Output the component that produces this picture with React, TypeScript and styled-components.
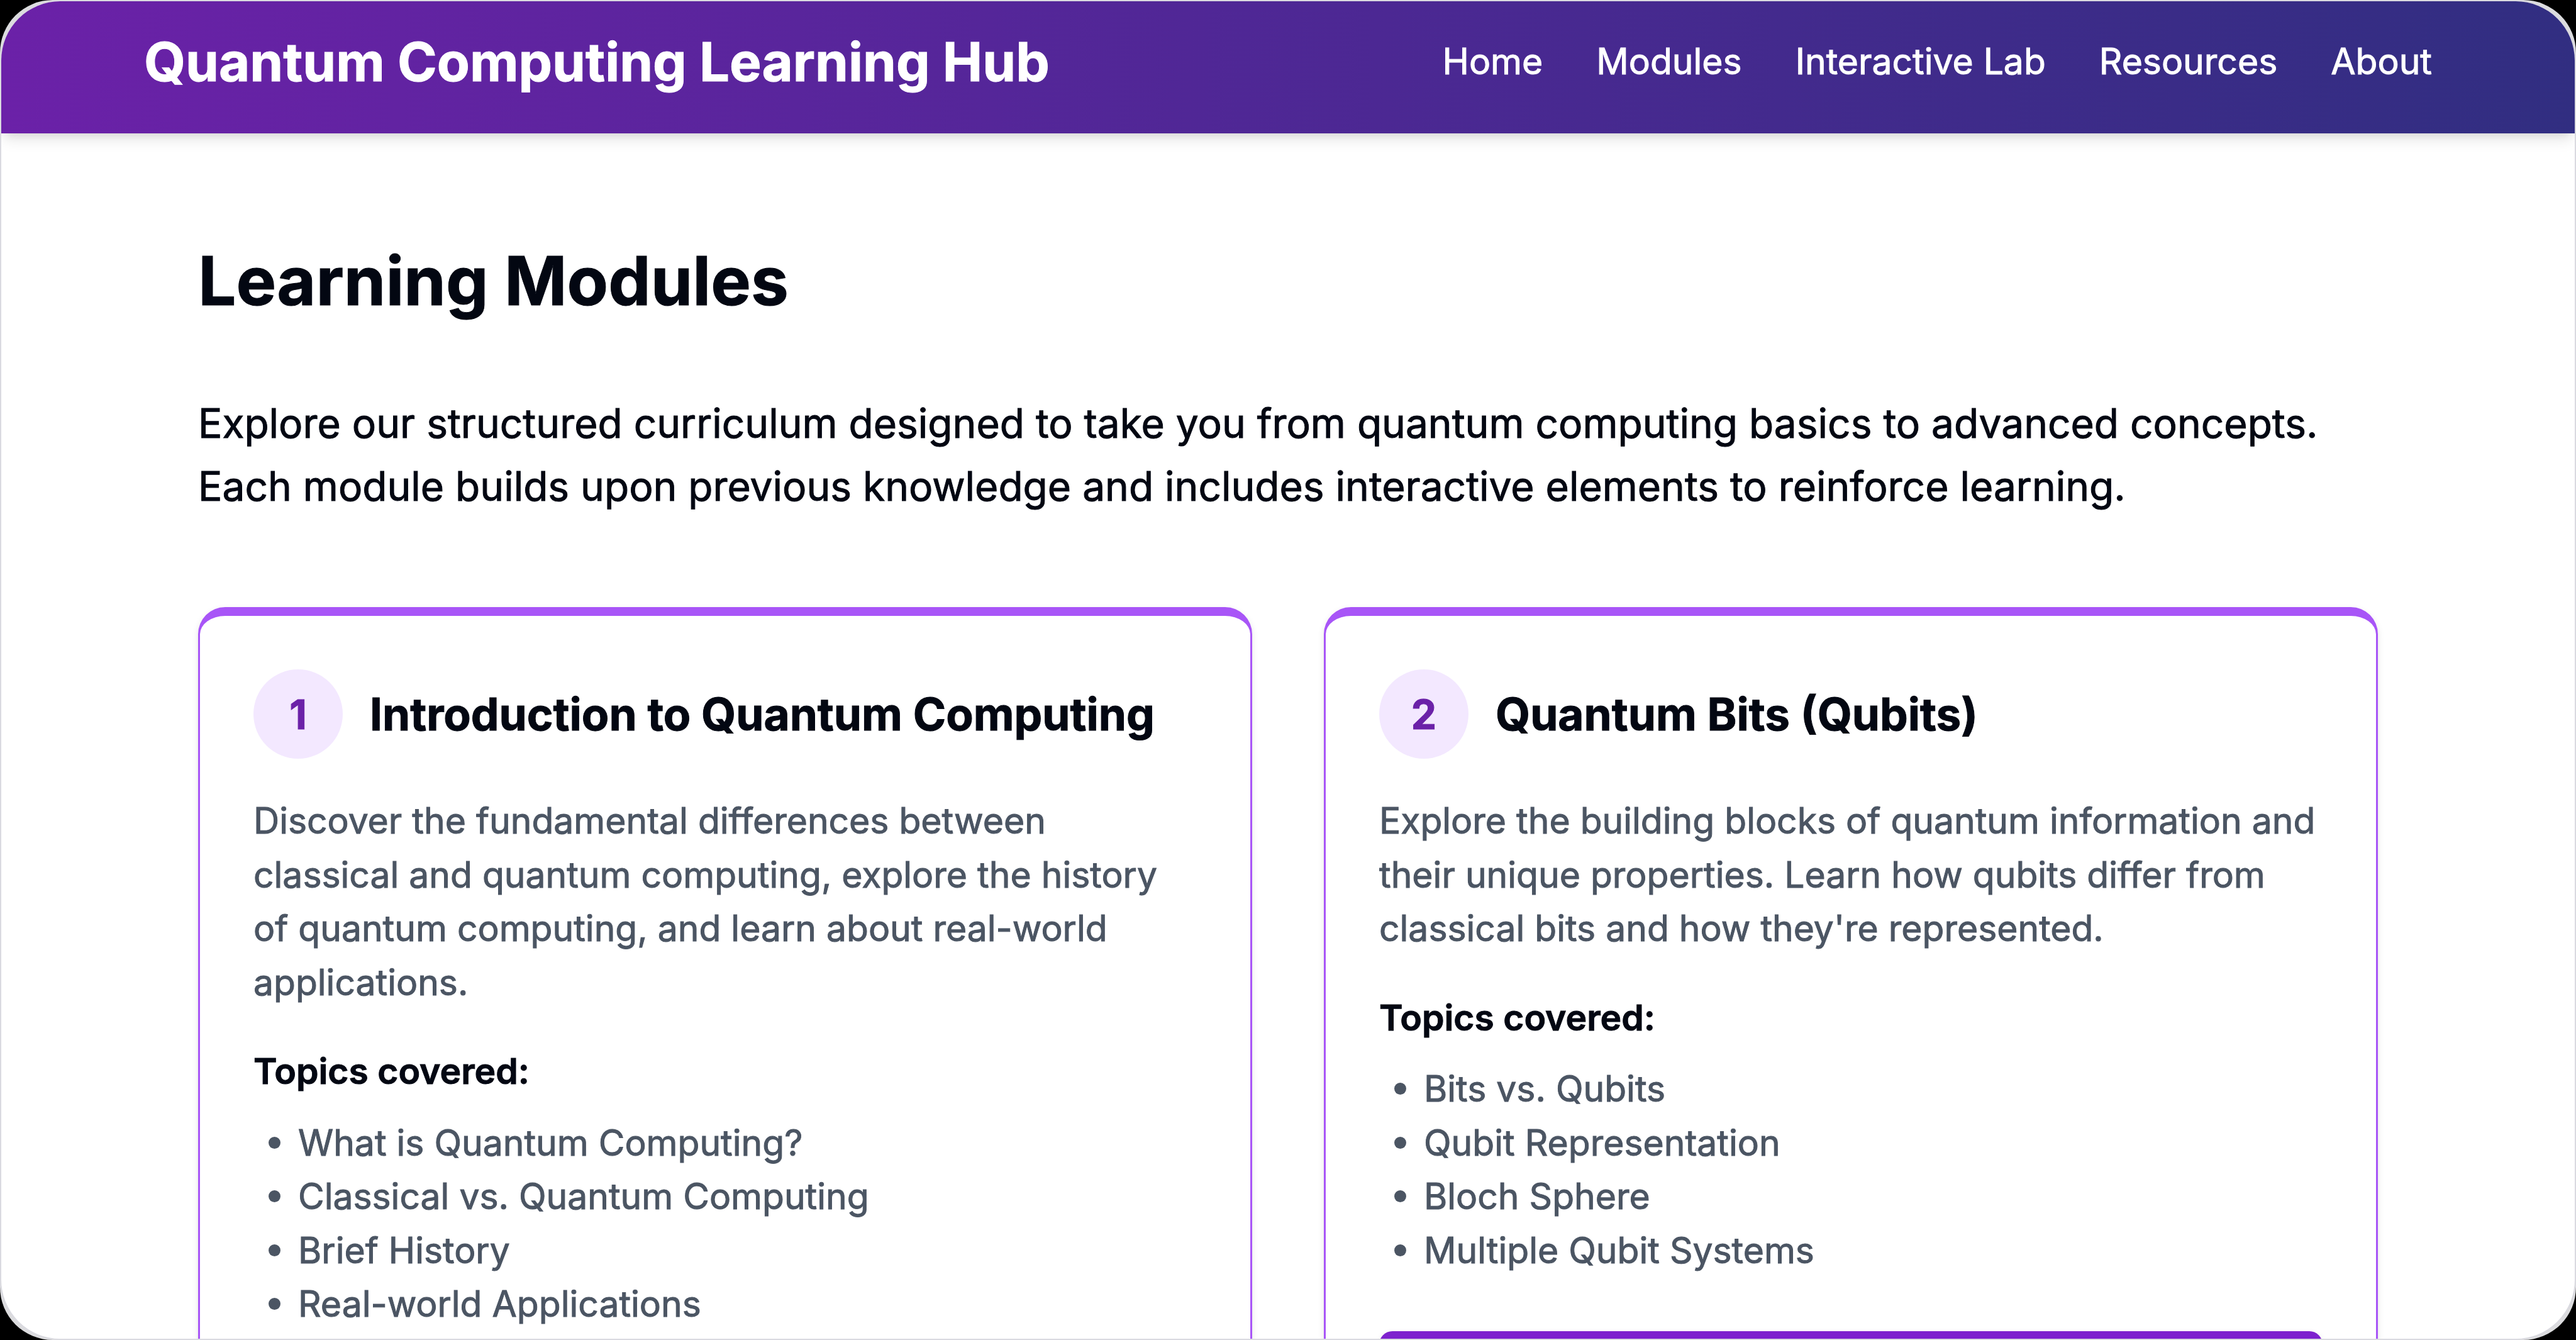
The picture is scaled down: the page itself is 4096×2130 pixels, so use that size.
import React from "react";
import styled, { createGlobalStyle } from "styled-components";

const Global = createGlobalStyle`
  * { box-sizing: border-box; margin: 0; padding: 0; }
  body {
    background: #000; color: #030712; overflow: hidden;
    font-family: Inter, "Liberation Sans", sans-serif;
    -webkit-text-stroke: 1px currentColor;
  }
`;
const Frame = styled.div`background: #dcdcde; border-radius: 84px;`;
const Window = styled.div`
  height: 100vh; overflow: hidden; background: #fff; border: 2px solid #dadae0; border-radius: 96px;
`;
const Header = styled.header`
  display: flex; justify-content: space-between; align-items: center;
  height: 210px; padding: 0 227px 16px;
  background: linear-gradient(to right, #6b21a8, #312e81);
  box-shadow: 0 14px 21px -4px rgba(0,0,0,.1), 0 7px 14px -7px rgba(0,0,0,.1);
  color: #fff;
`;
const Brand = styled.h1`font-size: 85px; font-weight: 700; line-height: 114px;`;
const Nav = styled.nav`display: flex; gap: 85px; padding-bottom: 4px;`;
const NavLink = styled.a`color: #fff; text-decoration: none; font-size: 57px; line-height: 85px;`;
const Main = styled.main`padding: 170px 313px 0;`;
const Title = styled.h2`font-size: 107px; line-height: 128px; font-weight: 700;`;
const Intro = styled.p`margin-top: 113px; font-size: 64px; line-height: 100px;`;
const Grid = styled.div`display: grid; grid-template-columns: 1fr 1fr; gap: 114px; margin-top: 142px;`;
const Card = styled.section`
  border: 3px solid #a855f7; border-top-width: 14px; border-radius: 43px; padding: 85px;
  box-shadow: 0 4px 11px rgba(0,0,0,.1), 0 4px 7px -4px rgba(0,0,0,.1);
`;
const CardHead = styled.div`display: flex; align-items: center; gap: 43px;`;
const Badge = styled.span`
  display: flex; align-items: center; justify-content: center; width: 142px; height: 142px; border-radius: 50%;
  background: #f3e8ff; color: #6b21a8; font-size: 64px; font-weight: 700;
`;
const CardTitle = styled.h3`font-size: 71px; line-height: 100px; font-weight: 700;`;
const Copy = styled.p`margin-top: 56px; color: #4b5563; font-size: 57px; line-height: 1.5;`;
const Topics = styled.h4`margin-top: 56px; font-size: 57px; line-height: 1.5; font-weight: 600;`;
const List = styled.ul`
  margin-top: 28px; padding-left: 24px; list-style: none; color: #4b5563; font-size: 57px; line-height: 1.5;
`;
const Topic = styled.li`
  display: flex; align-items: center; gap: 28px;
  &::before { content: ""; width: 19px; height: 19px; border-radius: 50%; background: currentColor; }
`;
const Start = styled.button`
  display: block; width: 100%; height: 142px; margin-top: 86px; border: 0; border-radius: 21px;
  background: #7e22ce; box-shadow: 0 4px 11px rgba(0,0,0,.1);
`;

const links = ["Home", "Modules", "Interactive Lab", "Resources", "About"];
const modules = [
  {
    title: "Introduction to Quantum Computing",
    copy: "Discover the fundamental differences between classical and quantum computing, explore the history of quantum computing, and learn about real-world applications.",
    topics: ["What is Quantum Computing?", "Classical vs. Quantum Computing", "Brief History", "Real-world Applications"],
  },
  {
    title: "Quantum Bits (Qubits)",
    copy: "Explore the building blocks of quantum information and their unique properties. Learn how qubits differ from classical bits and how they're represented.",
    topics: ["Bits vs. Qubits", "Qubit Representation", "Bloch Sphere", "Multiple Qubit Systems"],
  },
];

export default function App() {
  return (
    <Frame>
      <Global />
      <Window>
        <Header>
          <Brand>Quantum Computing Learning Hub</Brand>
          <Nav>{links.map((l) => <NavLink key={l} href="#">{l}</NavLink>)}</Nav>
        </Header>
        <Main>
          <Title>Learning Modules</Title>
          <Intro>
            Explore our structured curriculum designed to take you from quantum computing basics to advanced
            concepts. Each module builds upon previous knowledge and includes interactive elements to reinforce
            learning.
          </Intro>
          <Grid>
            {modules.map((m, i) => (
              <Card key={m.title}>
                <CardHead><Badge>{i + 1}</Badge><CardTitle>{m.title}</CardTitle></CardHead>
                <Copy>{m.copy}</Copy>
                <Topics>Topics covered:</Topics>
                <List>{m.topics.map((t) => <Topic key={t}>{t}</Topic>)}</List>
                <Start aria-label="Start module" />
              </Card>
            ))}
          </Grid>
        </Main>
      </Window>
    </Frame>
  );
}
